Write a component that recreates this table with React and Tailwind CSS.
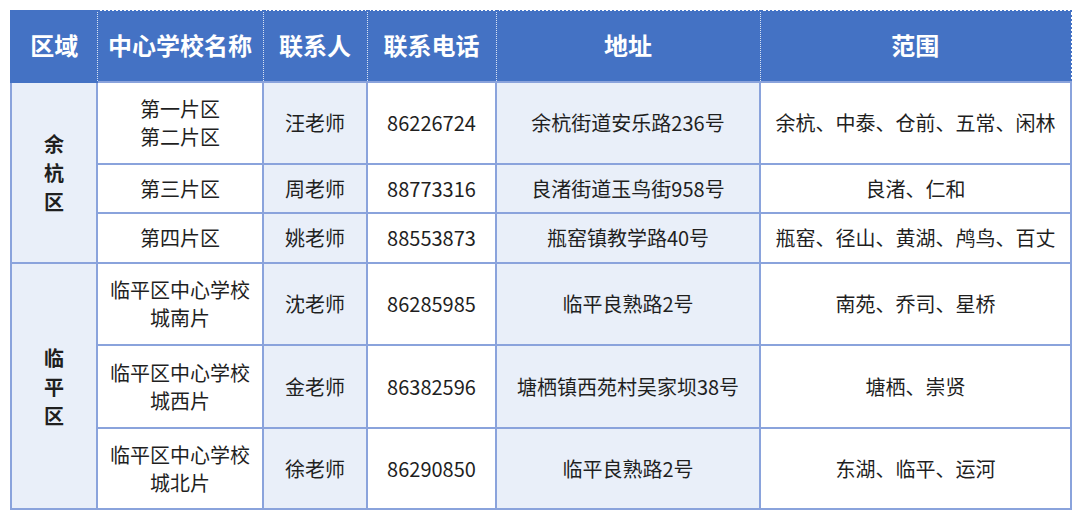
const font = {
  fontFamily: '"Noto Sans CJK SC", "Noto Sans", sans-serif',
};

const rows = [
  {
    area: "余杭区",
    span: 3,
    items: [
      { school: ["第一片区", "第二片区"], contact: "汪老师", phone: "86226724", addr: "余杭街道安乐路236号", range: "余杭、中泰、仓前、五常、闲林", h: "h-[82px]" },
      { school: ["第三片区"], contact: "周老师", phone: "88773316", addr: "良渚街道玉鸟街958号", range: "良渚、仁和", h: "h-[49px]" },
      { school: ["第四片区"], contact: "姚老师", phone: "88553873", addr: "瓶窑镇教学路40号", range: "瓶窑、径山、黄湖、鸬鸟、百丈", h: "h-[50px]" },
    ],
  },
  {
    area: "临平区",
    span: 3,
    items: [
      { school: ["临平区中心学校", "城南片"], contact: "沈老师", phone: "86285985", addr: "临平良熟路2号", range: "南苑、乔司、星桥", h: "h-[82px]" },
      { school: ["临平区中心学校", "城西片"], contact: "金老师", phone: "86382596", addr: "塘栖镇西苑村吴家坝38号", range: "塘栖、崇贤", h: "h-[83px]" },
      { school: ["临平区中心学校", "城北片"], contact: "徐老师", phone: "86290850", addr: "临平良熟路2号", range: "东湖、临平、运河", h: "h-[81px]" },
    ],
  },
];

const headers = ["区域", "中心学校名称", "联系人", "联系电话", "地址", "范围"];

const cell = "border-2 border-[#8aa3dc] text-center align-middle";

export default function App() {
  return (
    <div className="bg-white w-[1080px] h-[519px] px-[10px] pt-[10px]" style={font}>
      <table className="w-[1060px] table-fixed border-collapse text-[20px] leading-[28px] text-[#1f1f1f]">
        <colgroup>
          <col className="w-[86px]" />
          <col className="w-[166px]" />
          <col className="w-[104px]" />
          <col className="w-[129px]" />
          <col className="w-[264px]" />
          <col className="w-[311px]" />
        </colgroup>
        <thead>
          {/* header row */}
          <tr className="h-[71px] bg-[#4472c4]">
            {headers.map((h, i) => (
              <th
                key={h}
                className={`text-white font-bold text-[24px] pb-[3px] text-center align-middle border-y-2 border-[#4472c4] ${
                  i === 0 ? "border-l-2 border-l-[#4472c4]" : "border-l border-dotted border-l-white/80"
                } ${i === headers.length - 1 ? "border-r-2 border-r-[#4472c4]" : ""}`}
              >
                {h}
              </th>
            ))}
          </tr>
        </thead>
        <tbody>
          {rows.map((group) =>
            group.items.map((r, idx) => (
              <tr key={r.phone + idx} className={r.h}>
                {idx === 0 && (
                  <td rowSpan={group.span} className={`${cell} bg-[#e9eff9] font-bold leading-[29px]`}>
                    {group.area.split("").map((c) => (
                      <div key={c}>{c}</div>
                    ))}
                  </td>
                )}
                <td className={`${cell} bg-white`}>
                  {r.school.map((s) => (
                    <div key={s}>{s}</div>
                  ))}
                </td>
                <td className={`${cell} bg-[#e9eff9]`}>{r.contact}</td>
                <td className={`${cell} bg-white`}>{r.phone}</td>
                <td className={`${cell} bg-[#e9eff9]`}>{r.addr}</td>
                <td className={`${cell} bg-white`}>{r.range}</td>
              </tr>
            ))
          )}
        </tbody>
      </table>
    </div>
  );
}
